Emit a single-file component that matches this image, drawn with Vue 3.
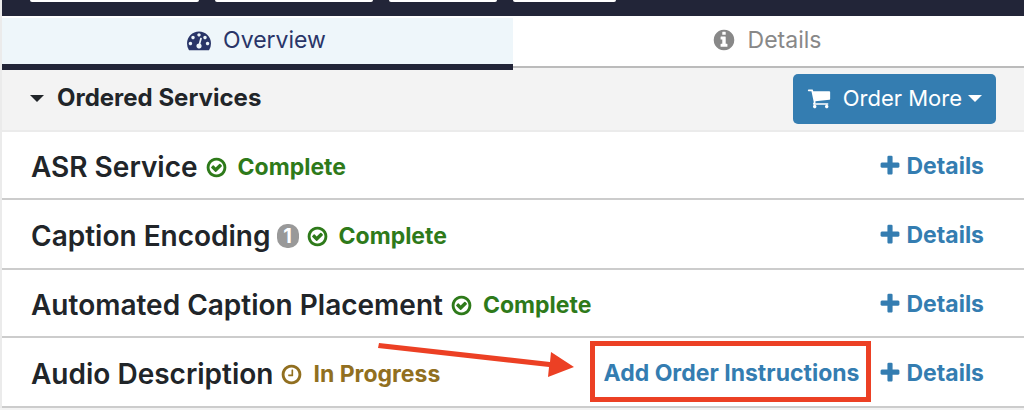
<script setup>
import { ref } from 'vue'

const ring = 'm141 83q0-148-73-273t-198-198-273-73-273 73-198 198-73 273 73 273 198 198 273 73 273-73 198-198 73-273zm224 0q0 209-103 385.5t-279.5 279.5-385.5 103-385.5-103-279.5-279.5-103-385.5 103-385.5 279.5-279.5 385.5-103 385.5 103 279.5 279.5 103 385.5z'
const icons = {
  gauge: 'M384 1152q0-53-37.5-90.5t-90.5-37.5-90.5 37.5-37.5 90.5 37.5 90.5 90.5 37.5 90.5-37.5 37.5-90.5zm192-448q0-53-37.5-90.5t-90.5-37.5-90.5 37.5-37.5 90.5 37.5 90.5 90.5 37.5 90.5-37.5 37.5-90.5zm428 481l101-382q6-26-7.5-48.5t-38.5-29.5-48 6.5-30 39.5l-101 382q-60 5-107 43.5t-63 98.5q-20 77 20 146t117 89 146-20 89-117q16-60-6-117t-72-91zm660-33q0-53-37.5-90.5t-90.5-37.5-90.5 37.5-37.5 90.5 37.5 90.5 90.5 37.5 90.5-37.5 37.5-90.5zm-640-640q0-53-37.5-90.5t-90.5-37.5-90.5 37.5-37.5 90.5 37.5 90.5 90.5 37.5 90.5-37.5 37.5-90.5zm448 192q0-53-37.5-90.5t-90.5-37.5-90.5 37.5-37.5 90.5 37.5 90.5 90.5 37.5 90.5-37.5 37.5-90.5zm320 448q0 261-141 483-19 29-54 29h-1402q-35 0-54-29-141-221-141-483 0-182 71-348t191-286 286-191 348-71 348 71 286 191 191 286 71 348z',
  info: 'M1152 1376v-160q0-14-9-23t-23-9h-96v-512q0-14-9-23t-23-9h-320q-14 0-23 9t-9 23v160q0 14 9 23t23 9h96v320h-96q-14 0-23 9t-9 23v160q0 14 9 23t23 9h448q14 0 23-9t9-23zm-128-896v-160q0-14-9-23t-23-9h-192q-14 0-23 9t-9 23v160q0 14 9 23t23 9h192q14 0 23-9t9-23zm640 416q0 209-103 385.5t-279.5 279.5-385.5 103-385.5-103-279.5-279.5-103-385.5 103-385.5 279.5-279.5 385.5-103 385.5 103 279.5 279.5 103 385.5z',
  cart: 'M704 1536q0 52-38 90t-90 38-90-38-38-90 38-90 90-38 90 38 38 90zm896 0q0 52-38 90t-90 38-90-38-38-90 38-90 90-38 90 38 38 90zm128-1088v512q0 24-16.5 42.5t-40.5 21.5l-1044 122q13 60 13 70 0 16-24 64h920q26 0 45 19t19 45-19 45-45 19h-1024q-26 0-45-19t-19-45q0-11 8-31.5t16-36 21.5-40 15.5-29.5l-177-823h-204q-26 0-45-19t-19-45 19-45 45-19h256q16 0 28.5 6.5t19.5 15.5 13 24.5 8 26 5.5 29.5 4.5 26h1201q26 0 45 19t19 45z',
  check: 'M1299 813l-422 422q-19 19-45 19t-45-19l-294-294q-19-19-19-45t19-45l102-102q19-19 45-19t45 19l147 147 275-275q19-19 45-19t45 19l102 102q19 19 19 45t-19 45z' + ring,
  clock: 'M1024 544v448q0 14-9 23t-23 9h-320q-14 0-23-9t-9-23v-64q0-14 9-23t23-9h224v-352q0-14 9-23t23-9h64q14 0 23 9t9 23zm416 352q0-148-73-273t-198-198-273-73-273 73-198 198-73 273 73 273 198 198 273 73 273-73 198-198 73-273z' + ring.slice(ring.indexOf('m224')),
  plus: 'M1600 736v192q0 40-28 68t-68 28h-416v416q0 40-28 68t-68 28h-192q-40 0-68-28t-28-68v-416h-416q-40 0-68-28t-28-68v-192q0-40 28-68t68-28h416v-416q0-40 28-68t68-28h192q40 0 68 28t28 68v416h416q40 0 68 28t28 68z'
}

const services = [
  { name: 'ASR Service', done: true },
  { name: 'Caption Encoding', count: 1, done: true },
  { name: 'Automated Caption Placement', done: true },
  { name: 'Audio Description', done: false, instructions: true }
]
const open = ref(true)
</script>

<template>
  <div class="page">
    <header class="topbar">
      <span class="pill pill-a"></span>
      <span class="pill pill-b"></span>
      <span class="pill pill-c"></span>
      <span class="pill pill-d"></span>
    </header>

    <nav class="tabs">
      <a class="tab active" href="#overview">
        <svg class="icon" viewBox="0 0 1792 1792" aria-hidden="true"><path :d="icons.gauge" /></svg>
        <span>Overview</span>
      </a>
      <a class="tab" href="#details">
        <svg class="icon" viewBox="0 0 1792 1792" aria-hidden="true"><path :d="icons.info" /></svg>
        <span>Details</span>
      </a>
    </nav>

    <section>
      <div class="section-head">
        <button class="toggle" type="button" :aria-expanded="open" @click="open = !open">
          <span class="caret"></span>
          <span>Ordered Services</span>
        </button>
        <button class="order" type="button">
          <svg class="icon" viewBox="0 0 1792 1792" aria-hidden="true"><path :d="icons.cart" /></svg>
          <span class="order-label">Order More</span>
          <span class="caret"></span>
        </button>
      </div>

      <ul v-if="open" class="services">
        <li v-for="s in services" :key="s.name" class="service">
          <h2 class="name">{{ s.name }}</h2>
          <span v-if="s.count" class="badge">{{ s.count }}</span>
          <span class="status" :class="{ pending: !s.done }">
            <svg class="icon" viewBox="0 0 1792 1792" aria-hidden="true"><path :d="s.done ? icons.check : icons.clock" /></svg>
            <span>{{ s.done ? 'Complete' : 'In Progress' }}</span>
          </span>
          <div class="actions">
            <a v-if="s.instructions" class="link marked" href="#instructions">
              Add Order Instructions
              <svg class="arrow" viewBox="0 0 196 38" aria-hidden="true">
                <path d="M1 3L0 8L171 27L170 37L196 27L173 12L172 22Z" />
              </svg>
            </a>
            <a class="link" href="#service-details">
              <svg class="icon" viewBox="0 0 1792 1792" aria-hidden="true"><path :d="icons.plus" /></svg>
              <span>Details</span>
            </a>
          </div>
        </li>
      </ul>
    </section>
  </div>
</template>

<style>
body {
  margin: 0;
  background: #f3f3f3;
}
</style>

<style scoped>
.page {
  border-left: 2px solid #ebebeb;
  font-family: Inter, "Liberation Sans", sans-serif;
  color: #212529;
}
.topbar {
  display: flex;
  gap: 16px;
  height: 16px;
  padding-left: 28px;
  background: #222538;
}
.pill {
  height: 2px;
  background: #fff;
  border-radius: 0 0 2px 2px;
}
.pill-a { width: 169px; }
.pill-b { width: 158px; }
.pill-c { width: 108px; }
.pill-d { width: 103px; }

.icon {
  flex: none;
  width: 24px;
  height: 24px;
  fill: currentColor;
}
.tabs {
  display: grid;
  grid-template-columns: 1fr 1fr;
  align-items: start;
  background: linear-gradient(#fff 50px, #f3f3f3 50px);
}
.tab {
  display: flex;
  align-items: center;
  justify-content: center;
  gap: 12px;
  box-sizing: border-box;
  height: 52px;
  padding: 0 4px 2px 0;
  border-bottom: 2px solid #bbb;
  color: #888;
  font-size: 23px;
  line-height: 28px;
  text-decoration: none;
}
.tab.active {
  margin-top: 2px;
  padding-right: 2px;
  border-bottom: 6px solid #222538;
  background: #eef6fa;
  color: #293568;
}
.section-head {
  display: flex;
  align-items: center;
  justify-content: space-between;
  padding: 4px 28px 6px;
  border-bottom: 2px solid #ebebeb;
  background: #f3f3f3;
}
button {
  display: flex;
  align-items: center;
  border: 0;
  font-family: inherit;
  font-size: 22px;
  line-height: 28px;
  cursor: pointer;
}
.toggle {
  gap: 13px;
  padding: 0 0 2px;
  background: none;
  color: #212529;
  font-size: 24px;
  font-weight: 700;
}
.caret {
  border: 7px solid transparent;
  border-top: 7px solid currentColor;
  border-bottom: 0;
}
.order {
  padding: 10px 14px 12px;
  border-radius: 5px;
  background: #347db1;
  color: #fff;
}
.order-label {
  margin: 0 6px 0 12px;
}
.services {
  margin: 0;
  padding: 0;
  list-style: none;
  background: #fff;
}
.service {
  display: flex;
  align-items: center;
  min-height: 66px;
  padding: 0 40px 0 29px;
  border-bottom: 2px solid #ccc;
}
.service:nth-child(even) {
  min-height: 68px;
}
.name {
  margin: 0;
  padding-top: 3px;
  font-size: 28px;
  line-height: 36px;
  font-weight: 600;
}
.badge {
  min-width: 22px;
  margin: 3px 0 0 6px;
  border-radius: 10px;
  background: #999;
  color: #fff;
  font-size: 20px;
  line-height: 24px;
  font-weight: 700;
  text-align: center;
}
.status {
  display: flex;
  align-items: center;
  gap: 10px;
  margin-left: 7px;
  padding-top: 4px;
  color: #2e7a1a;
  font-size: 23px;
  line-height: 28px;
  font-weight: 700;
}
.status .icon {
  width: 23px;
  height: 23px;
}
.status.pending {
  color: #916f20;
}
.actions {
  display: flex;
  gap: 19px;
  margin-left: auto;
  padding-top: 2px;
}
.link {
  display: flex;
  align-items: center;
  gap: 4px;
  color: #347db1;
  font-size: 23px;
  line-height: 28px;
  font-weight: 700;
  text-decoration: none;
}
.marked {
  position: relative;
}
.marked::after {
  content: "";
  position: absolute;
  inset: -18px -12px -15px -14px;
  border: 5px solid #ec4024;
}
.arrow {
  position: absolute;
  right: calc(100% + 30px);
  top: -19px;
  width: 196px;
  fill: #ec4024;
}
</style>
